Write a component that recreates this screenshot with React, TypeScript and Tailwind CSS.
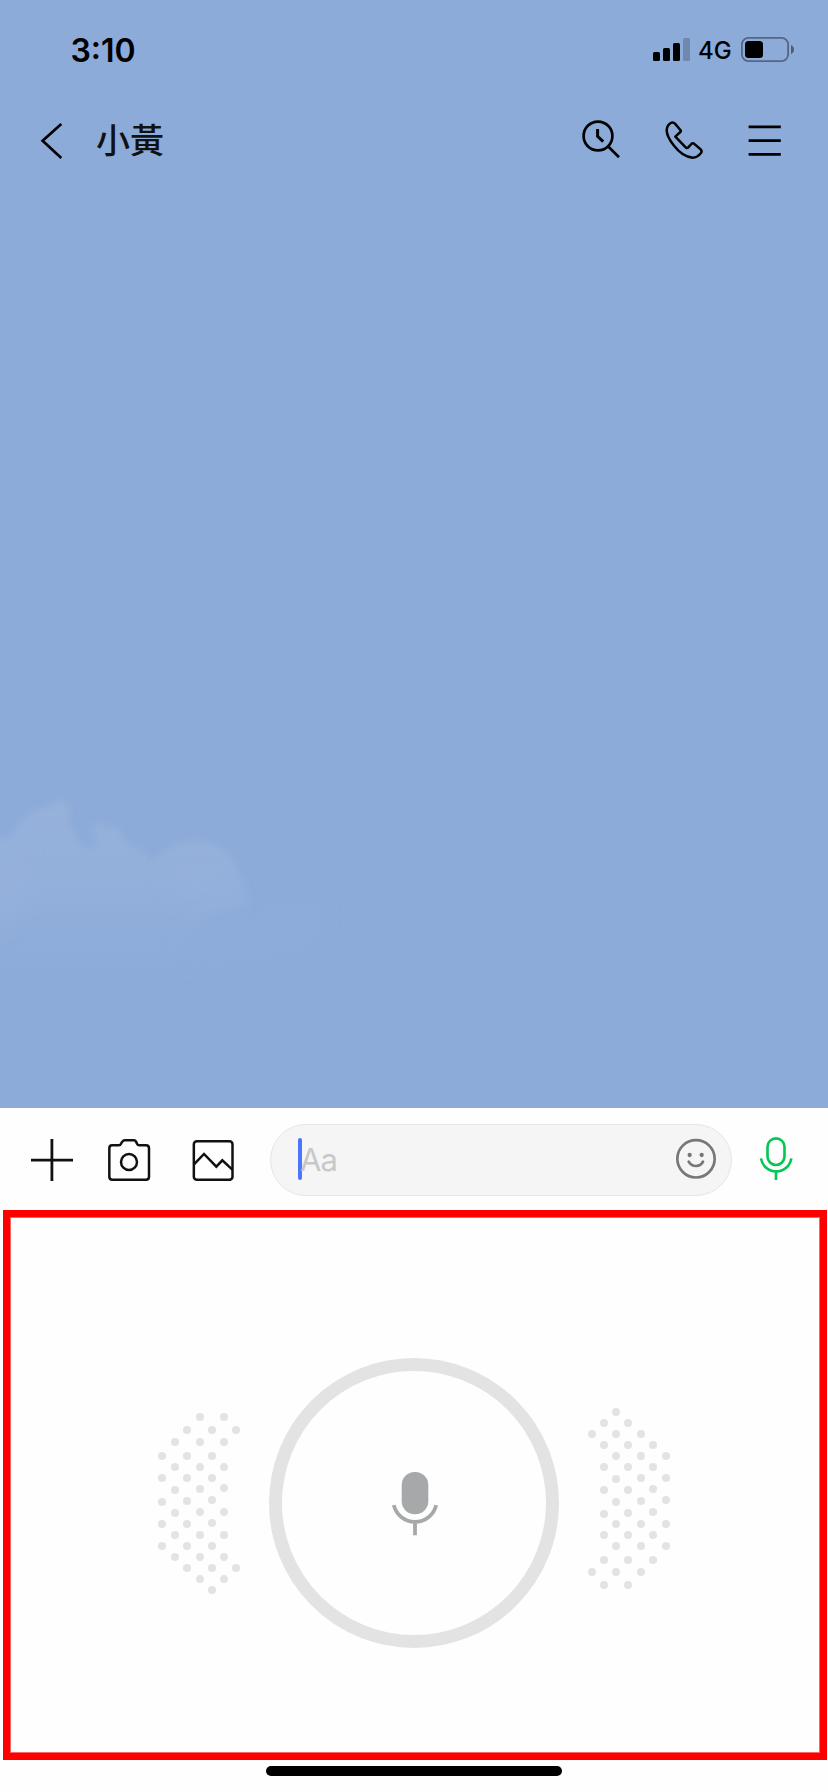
const LEFT_DOTS: [number, number][] = [
  [180, 81], [252, 81],
  [141, 120], [216, 120], [288, 120],
  [105, 156], [180, 156], [252, 156],
  [66, 198], [141, 198], [216, 198],
  [105, 231], [180, 231], [252, 231],
  [66, 264], [141, 264], [216, 264],
  [105, 300], [180, 297], [252, 294],
  [66, 336], [141, 333], [216, 330],
  [105, 369], [180, 366], [252, 366],
  [66, 402], [141, 402], [216, 399],
  [105, 435], [180, 435], [252, 435],
  [66, 468], [141, 468], [216, 468],
  [105, 501], [180, 501], [252, 501],
  [141, 534], [216, 534], [288, 534],
  [180, 567], [252, 567],
  [216, 600],
];

const RIGHT_DOTS: [number, number][] = [
  [138, 66],
  [102, 99], [174, 99],
  [66, 132], [138, 132], [213, 132],
  [102, 165], [174, 165], [249, 165],
  [138, 198], [213, 198], [288, 198],
  [102, 231], [174, 231], [249, 231],
  [138, 267], [213, 264], [288, 264],
  [102, 300], [174, 300], [249, 297],
  [138, 336], [213, 333], [288, 330],
  [102, 372], [174, 369], [249, 366],
  [138, 402], [213, 402], [288, 402],
  [102, 435], [174, 435], [249, 435],
  [138, 468], [213, 468], [288, 468],
  [102, 510], [174, 510], [249, 510],
  [66, 546], [138, 546], [213, 546],
  [102, 585], [174, 585],
];

function Dots({ points, className, viewBox }: { points: [number, number][]; className: string; viewBox: string }) {
  return (
    <svg className={className} viewBox={viewBox} fill="#e3e3e3" aria-hidden="true">
      {points.map(([x, y]) => (
        <circle key={`${x}-${y}`} cx={x} cy={y} r="12" />
      ))}
    </svg>
  );
}

function StatusBar() {
  return (
    <div className="flex h-[90px] pl-[70.5px]">
      <span className="mt-[30.5px] w-[582.5px] text-[32px] leading-[40px] font-semibold">3:10</span>
      <svg className="mt-[38px] h-[23px] w-[37px]" viewBox="0 0 37 23" aria-hidden="true">
        <rect x="0" y="14" width="7" height="9" rx="1.5" />
        <rect x="10" y="10" width="7" height="13" rx="1.5" />
        <rect x="20" y="5" width="7" height="18" rx="1.5" />
        <rect x="30" y="0" width="7" height="23" rx="1.5" fillOpacity="0.2" />
      </svg>
      <span className="mt-[35px] ml-[8px] w-[43px] text-[24px] leading-[32px] font-[450]">4G</span>
      <svg className="mt-[37px] h-[25px] w-[54px]" viewBox="0 0 54 25" aria-hidden="true">
        <rect x="0.9" y="0.9" width="46.2" height="23.2" rx="6.5" fill="none" stroke="#000" strokeOpacity="0.4" strokeWidth="1.8" />
        <rect x="4" y="4" width="18" height="17" rx="3.5" />
        <path d="M50 8 Q53 9.5 53 12.5 T50 17Z" fillOpacity="0.45" />
      </svg>
    </div>
  );
}

function Header() {
  return (
    <header className="flex h-[100px] pt-[30px] pl-[40px]">
      <svg className="h-[42px] w-[24px]" viewBox="40 120 24 42" fill="none" stroke="#000" strokeWidth="2.7" aria-hidden="true">
        <path d="M61.3 124 L42.6 140.8 L61.3 158" />
      </svg>
      <h1 className="-mt-[2px] ml-[32px] w-[484px] text-[34px] leading-[42px] font-medium text-[#111] font-['Noto_Sans_CJK_TC',sans-serif]">小黃</h1>
      <svg className="h-[42px] w-[42px]" viewBox="580 120 42 42" fill="none" stroke="#000" strokeWidth="2.7" aria-hidden="true">
        <circle cx="598" cy="136" r="14.4" />
        <path d="M608.5 146.7 L619 157.2" />
        <path d="M597.6 129 V136.4 L603.2 141.6" strokeWidth="3" />
      </svg>
      <svg className="ml-[38px] h-[42px] w-[44px]" viewBox="300 360 132 126" fill="none" stroke="#000" strokeWidth="7.5" strokeLinejoin="round" aria-hidden="true">
        <path d="M332 369 Q339 365 345 371 L361 390 Q364 393 361 396 L346 410 L377 442 Q380 445 384 443 L394 432 Q397 428 402 431 L422 448 Q427 453 423 459 Q412 473 398 473 C378 472 357 457 341 436 C327 418 320 405 320 390 Q321 376 332 369Z" />
      </svg>
      <svg className="ml-[44px] h-[42px] w-[34px]" viewBox="748 120 34 42" fill="none" stroke="#000" strokeWidth="2.8" aria-hidden="true">
        <path d="M748.6 126.9 H780.8 M748.6 140.6 H780.8 M748.6 154.3 H780.8" />
      </svg>
    </header>
  );
}

function Cloud() {
  return (
    <svg className="mt-[590px] h-[220px] w-[360px]" viewBox="0 0 1080 660" aria-hidden="true">
      <defs>
        <linearGradient id="fade" x1="0" y1="60" x2="0" y2="600" gradientUnits="userSpaceOnUse">
          <stop offset="0" stopColor="#9ab5dc" stopOpacity="0.7" />
          <stop offset="0.5" stopColor="#96b2dc" stopOpacity="0.6" />
          <stop offset="0.75" stopColor="#92afdb" stopOpacity="0.4" />
          <stop offset="1" stopColor="#92afdb" stopOpacity="0.05" />
        </linearGradient>
        <filter id="soft" x="-10%" y="-10%" width="120%" height="120%">
          <feGaussianBlur stdDeviation="9" />
        </filter>
        <filter id="wide" x="-20%" y="-30%" width="140%" height="160%">
          <feGaussianBlur stdDeviation="26" />
        </filter>
      </defs>
      <path
        filter="url(#soft)"
        fill="url(#fade)"
        d="M-30 180 L35 175 L55 130 L95 95 L150 78 L180 60 L208 78 L205 130 L235 185 L270 210 L290 190 L285 160 L270 145 L295 130 L325 145 L355 145 L375 185 L420 210 L460 245 L485 215 L525 190 L600 182 L650 195 L690 225 L720 280 L745 345 L745 375 L640 400 L580 450 L510 570 L280 600 L180 545 L-30 590Z"
      />
      <path filter="url(#wide)" fill="#95b1dc" fillOpacity="0.4" d="M-40 180 L60 190 L110 310 L60 400 L-40 480Z" />
      <path filter="url(#wide)" fill="#95b1dc" fillOpacity="0.35" d="M480 260 L640 230 L730 370 L560 390Z" />
      <path filter="url(#wide)" fill="#93b0db" fillOpacity="0.2" d="M560 420 L830 380 L960 360 L980 410 L940 500 L780 540 L540 560Z" />
    </svg>
  );
}

function InputBar() {
  return (
    <div className="flex h-[102px] pl-[30px]">
      <svg className="mt-[30px] h-[44px] w-[44px]" viewBox="30 1138 44 44" fill="none" stroke="#111" strokeWidth="2.8" aria-hidden="true">
        <path d="M31 1160.1 H73 M51.9 1139 V1181" />
      </svg>
      <svg className="mt-[30px] ml-[32px] h-[44px] w-[46px]" viewBox="318 114 138 132" fill="none" stroke="#111" strokeWidth="7.5" strokeLinejoin="round" aria-hidden="true">
        <path d="M336 136 H356 Q361 136 363 131 L367 125 Q370 121 374 121 H402 Q406 121 408 125 L411 131 Q413 136 418 136 H438 Q447 136 447 145 V230 Q447 239 438 239 H337 Q328 239 328 230 V145 Q328 136 336 136Z" />
        <circle cx="387" cy="186" r="24" />
      </svg>
      <svg className="mt-[30px] ml-[38px] h-[44px] w-[46px]" viewBox="570 114 138 132" fill="none" stroke="#111" strokeWidth="7.5" aria-hidden="true">
        <rect x="581.5" y="124" width="116" height="115" rx="9" />
        <path d="M582 193 L612 162 L649 200 L667 181 L697 209" />
      </svg>
      <div className="mt-[16px] ml-[34px] flex h-[72px] w-[462px] rounded-full border border-[#e6e6e6] bg-[#f5f5f5] pl-[27px]">
        <span className="mt-[13px] h-[42px] w-[4px] rounded-full bg-[#4c76ff]" />
        <span className="mt-[15px] -ml-[2px] w-[374px] text-[31px] leading-[40px] tracking-[-0.8px] text-[#c8c8c8]">Aa</span>
        <svg className="mt-[12px] h-[44px] w-[44px]" viewBox="102 111 132 132" fill="none" stroke="#777" strokeWidth="8" aria-hidden="true">
          <circle cx="168" cy="176.5" r="56" />
          <path d="M146 185 Q153 198 168 198 T189 185" strokeLinecap="round" />
          <circle cx="149" cy="165" r="6.5" fill="#777" stroke="none" />
          <circle cx="185" cy="165" r="6.5" fill="#777" stroke="none" />
        </svg>
      </div>
      <svg className="mt-[28px] ml-[24px] h-[46px] w-[40px]" viewBox="348 108 120 138" fill="none" stroke="#06c755" strokeWidth="8" aria-hidden="true">
        <rect x="382.5" y="115" width="51" height="80" rx="25.5" />
        <path d="M363 175 A46 46 0 0 0 454 175 M408 215 V240" />
      </svg>
    </div>
  );
}

function RecordPanel() {
  return (
    <section className="ml-[3px] flex h-[550px] w-[824px] items-start border-[7px] border-[#ff0000] pl-[130px] shadow-[inset_0_0_0_1px_#ff6666]">
      <Dots points={LEFT_DOTS} className="mt-[173px] h-[220px] w-[129px]" viewBox="0 0 387 660" />
      <button className="mt-[140.7px] flex size-[290px] items-start justify-center rounded-full border-[13px] border-[#e3e3e3]">
        <svg className="mt-[99px] ml-[2px] h-[70px] w-[50px]" viewBox="390 1469.7 50 70" fill="none" stroke="#a6a8a9" strokeWidth="3.8" aria-hidden="true">
          <rect x="401.7" y="1471.7" width="26.6" height="42.2" rx="13" fill="#a6a8a9" stroke="none" />
          <path d="M393.8 1504.8 A21.8 21.8 0 0 0 436.2 1504.8 M415 1521.5 V1535" />
        </svg>
      </button>
      <Dots points={RIGHT_DOTS} className="mt-[173px] ml-[11px] h-[220px] w-[120px]" viewBox="0 0 360 660" />
    </section>
  );
}

export default function App() {
  return (
    <div className="flex h-[1792px] w-[828px] flex-col overflow-hidden bg-[#fefefe] font-['Inter','Noto_Sans_CJK_TC',sans-serif] text-black">
      <div className="h-[1108px] bg-[#8dabd9]">
        <StatusBar />
        <Header />
        <Cloud />
      </div>
      <InputBar />
      <RecordPanel />
      <div className="mt-[6px] ml-[266px] h-[10px] w-[296px] rounded-full bg-black" />
    </div>
  );
}
